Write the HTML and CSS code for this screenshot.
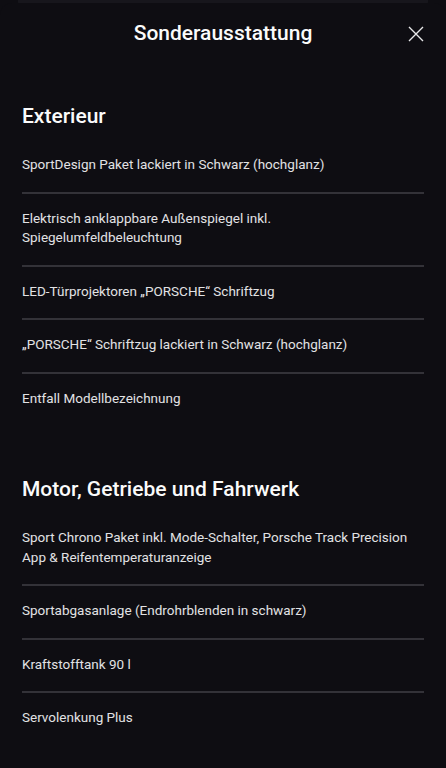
FILE: index.html
```html
<!DOCTYPE html>
<html lang="de">
<head>
<meta charset="utf-8">
<title>Sonderausstattung</title>
<link rel="stylesheet" href="styles.css">
</head>
<body>
<div class="backdrop"></div>
<div class="sheet">
  <header class="header">
    <h1 class="title">Sonderausstattung</h1>
    <button class="close" aria-label="Schließen">
      <svg width="16" height="16" viewBox="0 0 16 16"><path d="M1 1L15 15M15 1L1 15" stroke="#e8e8ea" stroke-width="1.4" fill="none"/></svg>
    </button>
  </header>
  <section class="section">
    <h2 class="heading">Exterieur</h2>
    <ul class="list">
      <li class="item">SportDesign Paket lackiert in Schwarz (hochglanz)</li>
      <li class="item">Elektrisch anklappbare Außenspiegel inkl. Spiegelumfeldbeleuchtung</li>
      <li class="item">LED-Türprojektoren „PORSCHE“ Schriftzug</li>
      <li class="item">„PORSCHE“ Schriftzug lackiert in Schwarz (hochglanz)</li>
      <li class="item">Entfall Modellbezeichnung</li>
    </ul>
  </section>
  <section class="section">
    <h2 class="heading">Motor, Getriebe und Fahrwerk</h2>
    <ul class="list">
      <li class="item">Sport Chrono Paket inkl. Mode-Schalter, Porsche Track Precision App &amp; Reifentemperaturanzeige</li>
      <li class="item">Sportabgasanlage (Endrohrblenden in schwarz)</li>
      <li class="item">Kraftstofftank 90 l</li>
      <li class="item">Servolenkung Plus</li>
    </ul>
  </section>
</div>
</body>
</html>
```

FILE: styles.css
```css
* { box-sizing: border-box; }
html, body {
  margin: 0;
  padding: 0;
  background: #0e0d12;
  height: 768px;
  overflow: hidden;
}
body {
  font-family: Roboto, "Liberation Sans", sans-serif;
  color: #e4e4e6;
  position: relative;
}
.backdrop {
  position: absolute;
  top: 0;
  left: 18px;
  right: 18px;
  height: 8px;
  background: #17161c;
  border-radius: 0 0 6px 6px;
}
.sheet {
  position: relative;
  margin-top: 3px;
  background: #0e0d12;
  border-radius: 12px 12px 0 0;
  padding: 0 22px;
  min-height: 765px;
}
.header {
  height: 60px;
  display: flex;
  align-items: center;
  justify-content: center;
  position: relative;
}
.title {
  margin: 0;
  font-size: 21px;
  line-height: 30px;
  font-weight: 500;
  color: #fbfbfb;
}
.close {
  position: absolute;
  right: 0;
  top: 23px;
  background: none;
  border: 0;
  padding: 0;
  width: 16px;
  height: 16px;
  display: flex;
}
.section { padding-top: 38px; }
.section + .section { padding-top: 49px; }
.heading {
  margin: 0 0 9px;
  font-size: 21px;
  line-height: 30px;
  font-weight: 500;
  color: #fbfbfb;
}
.list { list-style: none; margin: 0; padding: 0; }
.item {
  font-size: 13.5px;
  line-height: 19.5px;
  padding: 15px 0 17px;
  border-bottom: 2px solid #333238;
  color: #e2e2e4;
}
.item:last-child { border-bottom: 0; }
```
